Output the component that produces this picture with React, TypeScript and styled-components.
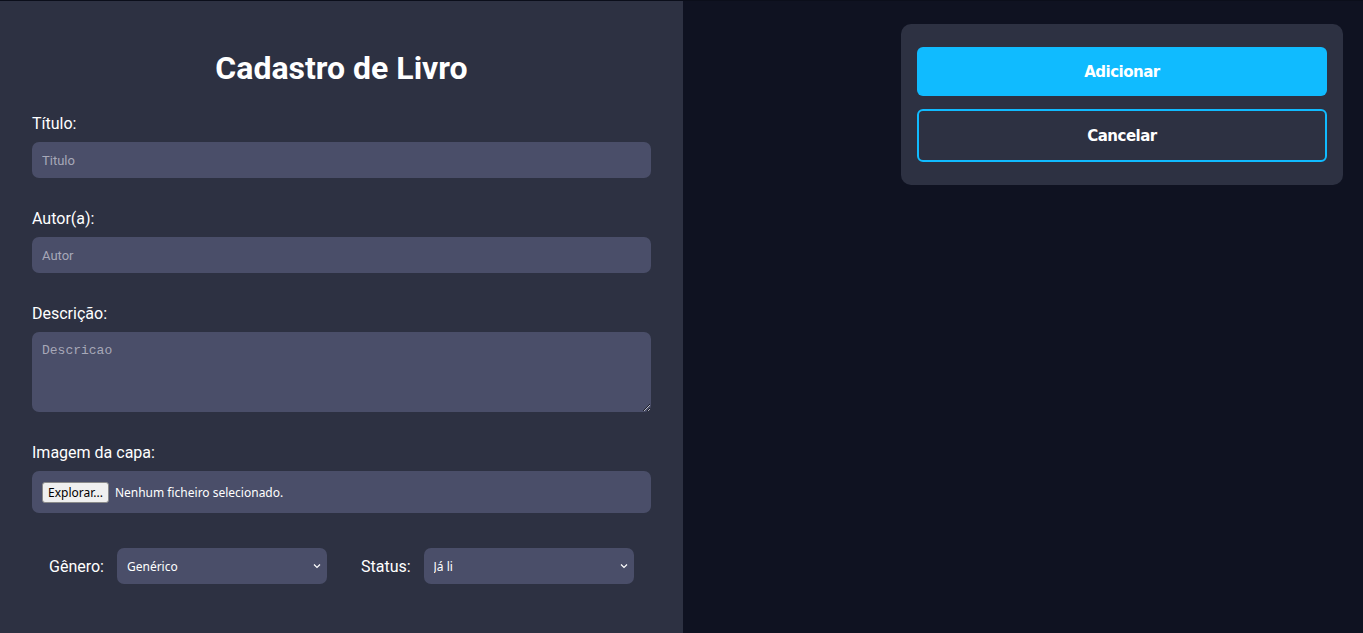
import React from "react";
import styled, { createGlobalStyle } from "styled-components";

const Global = createGlobalStyle`
  * { box-sizing: border-box; }
  html, body { margin: 0; padding: 0; background: #0f1221; }
  body { font-family: Roboto, "Liberation Sans", sans-serif; color: #ffffff; }
`;

const Page = styled.div`
  display: grid;
  grid-template-columns: 683px 1fr;
  height: 633px;
  border-top: 1px solid #0b0e1a;
  background: #0f1221;
`;

const FormPanel = styled.form`
  background: #2d3142;
  padding: 18px 32px 0 32px;
  display: flex;
  flex-direction: column;
`;

const Title = styled.h1`
  margin: 30px 0 27px;
  text-align: center;
  font-family: Roboto, sans-serif;
  font-weight: 700;
  font-size: 32px;
  line-height: 38px;
  color: #ffffff;
`;

const Field = styled.div`
  display: flex;
  flex-direction: column;
  width: 619px;
  margin-bottom: 31px;
`;

const Label = styled.label`
  font-family: Roboto, sans-serif;
  font-size: 16px;
  line-height: 19px;
  color: #ffffff;
  margin-bottom: 9px;
`;

const TextInput = styled.input`
  height: 36px;
  border: none;
  border-radius: 7px;
  background: #4a4e69;
  padding: 0 10px;
  font-family: Roboto, sans-serif;
  font-size: 13px;
  color: #fff;
  outline: none;
  &::placeholder { color: #a7a8b8; }
`;

const TextArea = styled.textarea`
  height: 80px;
  border: none;
  border-radius: 7px;
  background: #4a4e69;
  padding: 11px 10px;
  font-family: "Liberation Mono", "DejaVu Sans Mono", monospace;
  font-size: 13px;
  color: #fff;
  outline: none;
  resize: vertical;
  &::placeholder { color: #a7a8b8; }
`;

const FileBox = styled.div`
  height: 42px;
  border-radius: 7px;
  background: #4a4e69;
  padding: 0 10px;
  display: flex;
  align-items: center;
  gap: 6px;
  font-family: "Noto Sans", "Open Sans", sans-serif;
  font-size: 12px;
  color: #ffffff;
`;

const FileButton = styled.button`
  height: 21px;
  padding: 0 5px;
  border: 1px solid #8a8a8a;
  border-radius: 3px;
  background: #efefef;
  color: #000;
  font-family: "Noto Sans", "Open Sans", sans-serif;
  font-size: 12px;
  line-height: 19px;
`;

const SelectRow = styled.div`
  display: flex;
  align-items: center;
  padding: 4px 0 0 17px;
`;

const SelectGroup = styled.div`
  display: flex;
  align-items: center;
  gap: 13px;
  margin-right: 34px;
`;

const InlineLabel = styled.label`
  font-family: Roboto, sans-serif;
  font-size: 16px;
  color: #ffffff;
`;

const SelectWrap = styled.div`
  position: relative;
  width: 210px;
  height: 36px;
`;

const Select = styled.select`
  appearance: none;
  width: 100%;
  height: 100%;
  border: none;
  border-radius: 7px;
  background: #4a4e69;
  color: #fff;
  padding: 0 24px 0 10px;
  font-family: "Noto Sans", "Open Sans", sans-serif;
  font-size: 12px;
  outline: none;
`;

const Chevron = styled.svg`
  position: absolute;
  right: 6px;
  top: 15px;
  pointer-events: none;
`;

const Side = styled.div`
  padding: 23px 20px 0 218px;
`;

const Card = styled.div`
  background: #2d3142;
  border-radius: 10px;
  padding: 23px 16px 23px;
  display: flex;
  flex-direction: column;
  gap: 13px;
`;

const ActionButton = styled.button<{ $primary?: boolean }>`
  height: ${(p) => (p.$primary ? "49px" : "53px")};
  border-radius: 6px;
  border: ${(p) => (p.$primary ? "none" : "2px solid #10bbff")};
  background: ${(p) => (p.$primary ? "#10bbff" : "transparent")};
  color: #ffffff;
  font-family: "DejaVu Sans", "Noto Sans", sans-serif;
  font-weight: 700;
  font-size: 15px;
  letter-spacing: -0.5px;
  padding-top: 2px;
  cursor: pointer;
`;

const Arrow = () => (
  <Chevron width="8" height="6" viewBox="0 0 8 6">
    <path d="M1 1.5 L4 4.5 L7 1.5" stroke="#ffffff" strokeWidth="1.2" fill="none" />
  </Chevron>
);

export default function App() {
  return (
    <>
      <Global />
      <Page>
        <FormPanel onSubmit={(e) => e.preventDefault()}>
          <Title>Cadastro de Livro</Title>
          <Field>
            <Label>Título:</Label>
            <TextInput placeholder="Titulo" />
          </Field>
          <Field>
            <Label>Autor(a):</Label>
            <TextInput placeholder="Autor" />
          </Field>
          <Field>
            <Label>Descrição:</Label>
            <TextArea placeholder="Descricao" />
          </Field>
          <Field>
            <Label>Imagem da capa:</Label>
            <FileBox>
              <FileButton type="button">Explorar...</FileButton>
              <span>Nenhum ficheiro selecionado.</span>
            </FileBox>
          </Field>
          <SelectRow>
            <SelectGroup>
              <InlineLabel>Gênero:</InlineLabel>
              <SelectWrap>
                <Select defaultValue="Genérico">
                  <option>Genérico</option>
                </Select>
                <Arrow />
              </SelectWrap>
            </SelectGroup>
            <SelectGroup>
              <InlineLabel>Status:</InlineLabel>
              <SelectWrap>
                <Select defaultValue="Já li">
                  <option>Já li</option>
                </Select>
                <Arrow />
              </SelectWrap>
            </SelectGroup>
          </SelectRow>
        </FormPanel>
        <Side>
          <Card>
            <ActionButton $primary type="button">Adicionar</ActionButton>
            <ActionButton type="button">Cancelar</ActionButton>
          </Card>
        </Side>
      </Page>
    </>
  );
}
